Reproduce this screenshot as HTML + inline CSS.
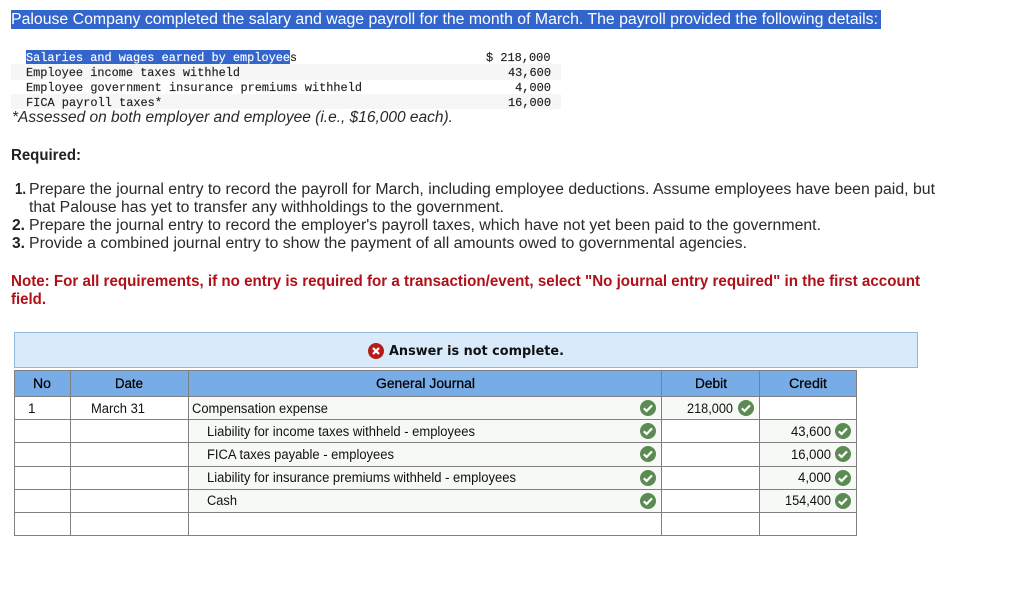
<!DOCTYPE html>
<html><head><meta charset="utf-8"><style>
html,body{margin:0;padding:0;background:#fff;width:1010px;height:611px;overflow:hidden}
svg{display:block}
.p{font:15.5px "Liberation Sans",sans-serif;fill:#2a2a2a}
.b{font:bold 15.5px "Liberation Sans",sans-serif;fill:#222}
.r{font:bold 15.5px "Liberation Sans",sans-serif;fill:#b01018}
.m{font:12px "Liberation Mono",monospace;fill:#222;stroke:#222;stroke-width:.15}
.t{font:13.5px "Liberation Sans",sans-serif;fill:#111}
.h2{font:13.5px "Liberation Sans",sans-serif;fill:#000;stroke:#000;stroke-width:.25}
</style></head><body>
<svg width="1010" height="611" viewBox="0 0 1010 611" xmlns="http://www.w3.org/2000/svg">
<defs>
<g id="ok"><circle r="8" fill="#5b8a52"/><path d="M-4.2 .3L-1.4 3L4 -2.6" fill="none" stroke="#fff" stroke-width="2.2"/></g>
</defs>
<rect x="11" y="10" width="870" height="19" fill="#3366cc"/>
<text class="p" style="fill:#fff" x="11" y="24" textLength="867" lengthAdjust="spacingAndGlyphs">Palouse Company completed the salary and wage payroll for the month of March. The payroll provided the following details:</text>

<rect x="11" y="64" width="550" height="16" fill="#f6f6f6"/>
<rect x="11" y="94" width="550" height="15" fill="#f6f6f6"/>
<rect x="26" y="50" width="264" height="14" fill="#3366cc"/>
<text class="m" style="fill:#fff;stroke:#fff" x="26" y="61" textLength="264" lengthAdjust="spacingAndGlyphs">Salaries and wages earned by employee</text>
<text class="m" x="290" y="61" textLength="7" lengthAdjust="spacingAndGlyphs">s</text>
<text class="m" x="26" y="76" textLength="214" lengthAdjust="spacingAndGlyphs">Employee income taxes withheld</text>
<text class="m" x="26" y="91" textLength="336" lengthAdjust="spacingAndGlyphs">Employee government insurance premiums withheld</text>
<text class="m" x="26" y="106" textLength="136" lengthAdjust="spacingAndGlyphs">FICA payroll taxes*</text>
<text class="m" x="486" y="61" textLength="64.5" lengthAdjust="spacingAndGlyphs">$ 218,000</text>
<text class="m" x="508" y="76" textLength="43" lengthAdjust="spacingAndGlyphs">43,600</text>
<text class="m" x="515" y="91" textLength="36" lengthAdjust="spacingAndGlyphs">4,000</text>
<text class="m" x="508" y="106" textLength="43" lengthAdjust="spacingAndGlyphs">16,000</text>
<text class="p" style="font-style:italic" x="12" y="122" textLength="441" lengthAdjust="spacingAndGlyphs">*Assessed on both employer and employee (i.e., $16,000 each).</text>

<text class="b" x="11" y="160" textLength="70" lengthAdjust="spacingAndGlyphs">Required:</text>
<text class="b" x="15" y="194" textLength="11" lengthAdjust="spacingAndGlyphs">1.</text>
<text class="p" x="29" y="194" textLength="906" lengthAdjust="spacingAndGlyphs">Prepare the journal entry to record the payroll for March, including employee deductions. Assume employees have been paid, but</text>
<text class="p" x="29" y="212" textLength="475" lengthAdjust="spacingAndGlyphs">that Palouse has yet to transfer any withholdings to the government.</text>
<text class="b" x="12" y="230" textLength="13" lengthAdjust="spacingAndGlyphs">2.</text>
<text class="p" x="29" y="230" textLength="792" lengthAdjust="spacingAndGlyphs">Prepare the journal entry to record the employer's payroll taxes, which have not yet been paid to the government.</text>
<text class="b" x="12" y="248" textLength="13" lengthAdjust="spacingAndGlyphs">3.</text>
<text class="p" x="29" y="248" textLength="718" lengthAdjust="spacingAndGlyphs">Provide a combined journal entry to show the payment of all amounts owed to governmental agencies.</text>
<text class="r" x="11" y="286" textLength="909" lengthAdjust="spacingAndGlyphs">Note: For all requirements, if no entry is required for a transaction/event, select "No journal entry required" in the first account</text>
<text class="r" x="11" y="304" textLength="35" lengthAdjust="spacingAndGlyphs">field.</text>

<rect x="14.5" y="332.5" width="903" height="35" fill="#d9ebfa" stroke="#93b8dd"/>
<circle cx="376" cy="351" r="8" fill="#b71c1c"/>
<path d="M373 348L379 354M379 348L373 354" stroke="#fff" stroke-width="2.2"/>
<text x="389" y="355" style="font:bold 13.5px 'DejaVu Sans',sans-serif;fill:#111" textLength="175" lengthAdjust="spacingAndGlyphs">Answer is not complete.</text>

<rect x="14" y="370" width="843" height="26" fill="#78ace6"/>
<rect x="189" y="397" width="472" height="115" fill="#f7f9f6"/>
<rect x="662" y="397" width="97" height="22" fill="#f7f9f6"/>
<rect x="760" y="420" width="96" height="92" fill="#f7f9f6"/>
<g fill="none" stroke="#808080" stroke-width="1">
<path d="M14.5 370.5H856.5V535.5H14.5Z"/>
<path d="M14.5 396.5H856.5M14.5 419.5H856.5M14.5 442.5H856.5M14.5 466.5H856.5M14.5 489.5H856.5M14.5 512.5H856.5"/>
<path d="M70.5 370.5V535.5M188.5 370.5V535.5M661.5 370.5V535.5M759.5 370.5V535.5"/>
</g>
<text class="h2" x="33" y="388" textLength="18" lengthAdjust="spacingAndGlyphs">No</text>
<text class="h2" x="115" y="388" textLength="28" lengthAdjust="spacingAndGlyphs">Date</text>
<text class="h2" x="376" y="388" textLength="99" lengthAdjust="spacingAndGlyphs">General Journal</text>
<text class="h2" x="695" y="388" textLength="32" lengthAdjust="spacingAndGlyphs">Debit</text>
<text class="h2" x="789" y="388" textLength="38" lengthAdjust="spacingAndGlyphs">Credit</text>

<text class="t" x="28" y="413">1</text>
<text class="t" x="91" y="413" textLength="54" lengthAdjust="spacingAndGlyphs">March 31</text>
<text class="t" x="192" y="413" textLength="136" lengthAdjust="spacingAndGlyphs">Compensation expense</text>
<text class="t" x="207" y="436" textLength="268" lengthAdjust="spacingAndGlyphs">Liability for income taxes withheld - employees</text>
<text class="t" x="207" y="459" textLength="187" lengthAdjust="spacingAndGlyphs">FICA taxes payable - employees</text>
<text class="t" x="207" y="482" textLength="309" lengthAdjust="spacingAndGlyphs">Liability for insurance premiums withheld - employees</text>
<text class="t" x="207" y="505" textLength="30" lengthAdjust="spacingAndGlyphs">Cash</text>
<text class="t" x="687" y="413" textLength="46" lengthAdjust="spacingAndGlyphs">218,000</text>
<text class="t" x="791" y="436" textLength="40" lengthAdjust="spacingAndGlyphs">43,600</text>
<text class="t" x="791" y="459" textLength="40" lengthAdjust="spacingAndGlyphs">16,000</text>
<text class="t" x="798" y="482" textLength="33" lengthAdjust="spacingAndGlyphs">4,000</text>
<text class="t" x="785" y="505" textLength="46" lengthAdjust="spacingAndGlyphs">154,400</text>

<use href="#ok" x="648" y="408"/>
<use href="#ok" x="648" y="431"/>
<use href="#ok" x="648" y="454"/>
<use href="#ok" x="648" y="478"/>
<use href="#ok" x="648" y="501"/>
<use href="#ok" x="746" y="408"/>
<use href="#ok" x="843" y="431"/>
<use href="#ok" x="843" y="454"/>
<use href="#ok" x="843" y="478"/>
<use href="#ok" x="843" y="501"/>
</svg>
</body></html>
